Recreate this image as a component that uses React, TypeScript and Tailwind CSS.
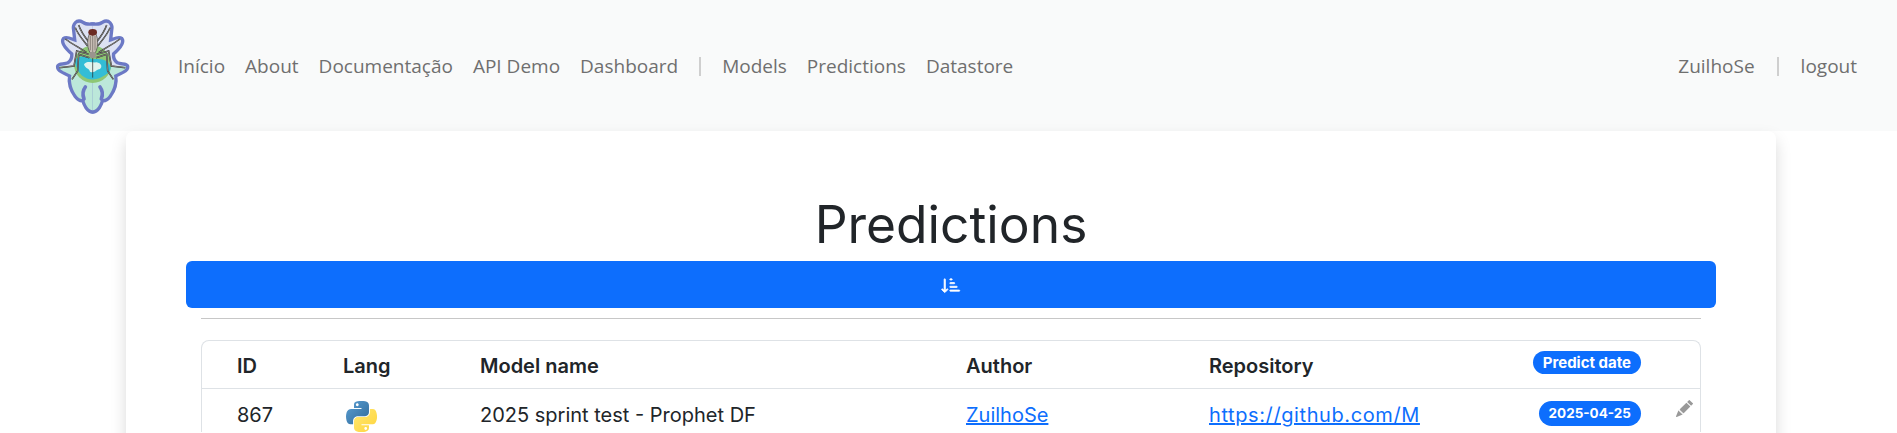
const navLinks = ['Início', 'About', 'Documentação', 'API Demo', 'Dashboard'];
const navLinksRight = ['Models', 'Predictions', 'Datastore'];
const tableCols = 'grid grid-cols-[106px_137px_486px_243px_324px_1fr] items-center pl-[35px] text-[20px]';

function Logo() {
    const half = 'M160 44 C148 44 138 46 128 38 C114 30 104 42 108 58 L112 94 C100 92 84 80 76 86 C70 94 86 112 102 126 C104 140 100 152 88 160 C74 166 58 162 60 170 C62 178 78 182 96 192 C92 215 100 238 112 254 C120 264 128 266 134 262 C138 282 148 298 160 298 Z';
    const legs = 'M150 95 C130 70 122 55 118 42 M170 95 C190 70 198 55 202 42 M145 105 C125 80 112 65 108 50 M175 105 C195 80 208 65 212 50 M142 125 C120 110 100 100 78 84 M178 125 C200 110 220 100 242 84 M148 130 L112 120 L104 165 L60 170 M172 130 L208 120 L216 165 L258 170 M150 140 L118 130 L115 180 L98 205 M170 140 L202 130 L205 180 L222 205';
    return (
        <svg width="90" height="110" viewBox="2 0 270 330" className="shrink-0 overflow-visible">
            <defs>
                <linearGradient id="logoFill" gradientUnits="userSpaceOnUse" x1="0" y1="0" x2="0" y2="330">
                    <stop offset="0.5" stopColor="#dde2f3" />
                    <stop offset="0.5" stopColor="#bce8da" />
                </linearGradient>
            </defs>
            <path d={half} fill="#6c79c5" stroke="#6c79c5" strokeWidth="20" strokeLinejoin="round" />
            <path d={half} fill="#6c79c5" stroke="#6c79c5" strokeWidth="20" strokeLinejoin="round" transform="translate(320 0) scale(-1 1)" />
            <path d={half} fill="url(#logoFill)" />
            <path d={half} fill="url(#logoFill)" transform="translate(320 0) scale(-1 1)" />
            <path d="M134 264 C128 248 132 236 138 228 M186 264 C192 248 188 236 182 228" fill="none" stroke="#6c79c5" strokeWidth="11" strokeLinecap="round" />
            <circle cx="160" cy="160" r="56" fill="#8ec775" />
            <path d="M106 150 C116 130 140 135 160 145 C190 140 210 150 214 170 C212 188 195 192 180 202 C150 212 115 200 106 150 Z" fill="#33bdd6" />
            <path d="M134 160 C142 148 160 156 172 154 C186 156 190 168 182 174 C172 174 166 188 152 182 C150 172 136 172 134 160 Z" fill="#e0f4ef" />
            <path d={legs} fill="none" stroke="#2b2b2b" strokeWidth="4.5" />
            <path d={legs} fill="none" stroke="#a8a39c" strokeWidth="2" />
            <path d="M160 128 L160 200" stroke="#222" strokeWidth="2" />
            <ellipse cx="160" cy="95" rx="15" ry="35" fill="#c9bfb7" stroke="#444" strokeWidth="2" />
            <path d="M153 75 V118 M160 72 V125 M167 75 V118" stroke="#6e6660" strokeWidth="2" />
            <ellipse cx="160" cy="64" rx="13" ry="10" fill="#6b2a22" />
            <ellipse cx="160" cy="132" rx="10" ry="10" fill="#9a948e" />
        </svg>
    );
}

function PythonIcon() {
    return (
        <svg width="31" height="31" viewBox="0 0 111 111" className="ml-[3px]">
            <defs>
                <linearGradient id="pyBlue" x1="0" y1="0" x2="1" y2="1">
                    <stop offset="0" stopColor="#5a9fd4" />
                    <stop offset="1" stopColor="#306998" />
                </linearGradient>
                <linearGradient id="pyYellow" x1="0" y1="0" x2="1" y2="1">
                    <stop offset="0" stopColor="#ffe873" />
                    <stop offset="1" stopColor="#ffd43b" />
                </linearGradient>
            </defs>
            <path fill="url(#pyBlue)" d="M54.919 0C50.335.021 45.958.412 42.106 1.094 30.76 3.098 28.7 7.294 28.7 15.031V25.25h26.813v3.406H18.638c-7.792 0-14.616 4.684-16.75 13.594-2.462 10.213-2.571 16.586 0 27.25 1.906 7.938 6.458 13.594 14.25 13.594h9.219V70.844c0-8.85 7.657-16.656 16.75-16.656h26.781c7.455 0 13.406-6.138 13.406-13.625V15.031c0-7.266-6.13-12.725-13.406-13.937C64.282.328 59.502-.02 54.919 0zM40.419 8.219c2.77 0 5.031 2.299 5.031 5.125 0 2.816-2.262 5.094-5.031 5.094-2.78 0-5.031-2.277-5.031-5.094 0-2.826 2.252-5.125 5.031-5.125z" />
            <path fill="url(#pyYellow)" d="M85.638 28.656v11.906c0 9.231-7.826 17-16.75 17H42.106c-7.336 0-13.406 6.278-13.406 13.625v25.531c0 7.266 6.319 11.54 13.406 13.625 8.487 2.496 16.626 2.947 26.781 0 6.75-1.954 13.406-5.888 13.406-13.625V86.5H55.513v-3.406h40.188c7.792 0 10.696-5.435 13.406-13.594 2.799-8.399 2.68-16.476 0-27.25-1.926-7.757-5.604-13.594-13.406-13.594H85.638zM70.575 93.313c2.78 0 5.031 2.277 5.031 5.094 0 2.826-2.252 5.125-5.031 5.125-2.77 0-5.031-2.299-5.031-5.125 0-2.816 2.262-5.094 5.031-5.094z" />
        </svg>
    );
}

function Navbar() {
    return (
        <nav className="flex h-[131px] items-center bg-[#f9fafa] pl-[40px] pr-[30px] font-['Open_Sans',sans-serif] text-[19px] text-[#6f6f6f]">
            <Logo />
            <div className="ml-[38px] flex items-center pt-[1px]">
                {navLinks.map((link) => (
                    <a key={link} className="px-[10px]">{link}</a>
                ))}
                <span className="mx-[11px] h-[19px] w-[2px] bg-[#cfcfcf]" />
                {navLinksRight.map((link) => (
                    <a key={link} className="px-[10px]">{link}</a>
                ))}
            </div>
            <div className="ml-auto flex items-center pt-[1px]">
                <a className="px-[10px]">ZuilhoSe</a>
                <span className="mx-[12px] h-[19px] w-[2px] bg-[#cfcfcf]" />
                <a className="px-[10px]">logout</a>
            </div>
        </nav>
    );
}

export default function App() {
    return (
        <div className="h-[433px] overflow-hidden bg-white font-['Inter',sans-serif] text-[#212529]">
            <Navbar />
            <main className="ml-[126px] h-[400px] w-[1650px] rounded-lg bg-white px-[60px] shadow-[0_8px_16px_rgba(0,0,0,0.15)]">
                <h1 className="pt-[56px] text-center text-[51.5px] leading-[74px] font-normal">Predictions</h1>
                <button className="flex h-[47px] w-full items-center justify-center rounded-md bg-[#0d6efd] text-white">
                    <svg width="20" height="20" viewBox="0 0 16 16" fill="currentColor" stroke="currentColor" strokeWidth="0.6">
                        <path d="M3.5 3.5a.5.5 0 0 0-1 0v8.793l-1.146-1.147a.5.5 0 0 0-.708.708l2 1.999.007.007a.497.497 0 0 0 .7-.006l2-2a.5.5 0 0 0-.707-.708L3.5 12.293V3.5zm4 .5a.5.5 0 0 1 0-1h1a.5.5 0 0 1 0 1h-1zm0 3a.5.5 0 0 1 0-1h3a.5.5 0 0 1 0 1h-3zm0 3a.5.5 0 0 1 0-1h5a.5.5 0 0 1 0 1h-5zM7 12.5a.5.5 0 0 0 .5.5h7a.5.5 0 0 0 0-1h-7a.5.5 0 0 0-.5.5z" />
                    </svg>
                </button>
                <div className="px-[15px]">
                    <hr className="mt-[10px] mb-[21px] border-[#c7c7c7]" />
                    <div className="rounded-t-lg border border-b-0 border-[#dee2e6]">
                        <div className={`${tableCols} h-[48px] border-b border-[#dee2e6] pt-[3px] font-semibold`}>
                            <span>ID</span>
                            <span>Lang</span>
                            <span>Model name</span>
                            <span>Author</span>
                            <span>Repository</span>
                            <span className="-mt-[7px] flex w-[108px] justify-end">
                                <span className="rounded-full bg-[#0d6efd] px-[10px] py-[3px] text-[15px] leading-[17px] font-bold whitespace-nowrap text-white">Predict date</span>
                            </span>
                        </div>
                        <div className={`${tableCols} pt-[8px]`}>
                            <span>867</span>
                            <span className="pt-[4px]"><PythonIcon /></span>
                            <span>2025 sprint test - Prophet DF</span>
                            <a className="text-[#0d6efd] underline">ZuilhoSe</a>
                            <a className="tracking-[0.6px] text-[#0d6efd] underline">https://github.com/M</a>
                            <span className="relative -mt-[2px] flex">
                                <span className="flex w-[108px] justify-end">
                                    <span className="rounded-full bg-[#0d6efd] px-[10px] py-[3px] text-[13.5px] leading-[19px] font-bold text-white">2025-04-25</span>
                                </span>
                                <svg width="17" height="17" viewBox="0 0 16 16" fill="#999" className="absolute right-[7px] -top-[1px]">
                                    <path d="M12.854.146a.5.5 0 0 0-.707 0L10.5 1.793 14.207 5.5l1.647-1.646a.5.5 0 0 0 0-.708l-3-3zm.646 6.061L9.793 2.5 3.293 9H3.5a.5.5 0 0 1 .5.5v.5h.5a.5.5 0 0 1 .5.5v.5h.5a.5.5 0 0 1 .5.5v.5h.5a.5.5 0 0 1 .5.5v.207l6.5-6.5zm-7.468 7.468A.5.5 0 0 1 6 13.5V13h-.5a.5.5 0 0 1-.5-.5V12h-.5a.5.5 0 0 1-.5-.5V11h-.5a.5.5 0 0 1-.5-.5V10h-.5a.499.499 0 0 1-.175-.032l-.179.178a.5.5 0 0 0-.11.168l-2 5a.5.5 0 0 0 .65.65l5-2a.5.5 0 0 0 .168-.11l.178-.178z" />
                                </svg>
                            </span>
                        </div>
                    </div>
                </div>
            </main>
        </div>
    );
}
